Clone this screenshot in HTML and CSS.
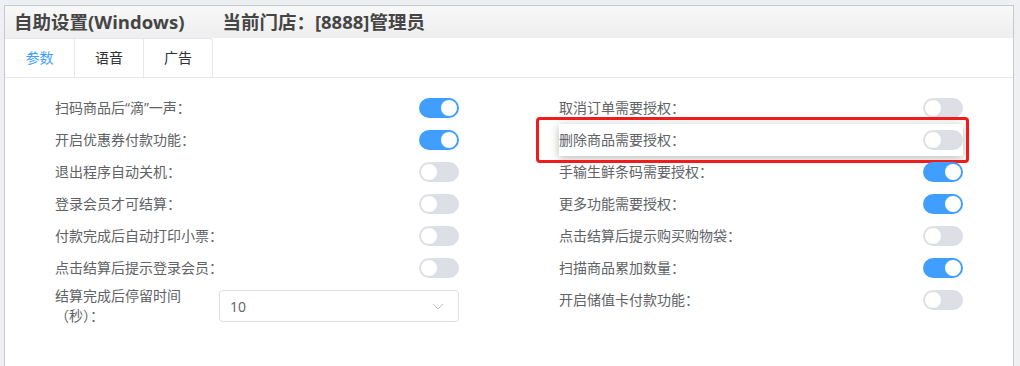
FILE: index.html
```html
<!DOCTYPE html>
<html lang="zh-CN">
<head>
<meta charset="utf-8">
<title>自助设置(Windows)</title>
<link rel="stylesheet" href="styles.css">
</head>
<body>
<div class="panel">
  <div class="panel-head">
    <span class="title">自助设置(Windows)</span>
    <span class="title store">当前门店：[8888]管理员</span>
  </div>
  <div class="tabs">
    <div class="tab-list">
      <div class="tab active">参数</div>
      <div class="tab">语音</div>
      <div class="tab">广告</div>
    </div>
  </div>
  <div class="content">
    <div class="form-grid">
      <div class="col">
        <div class="row"><span class="label">扫码商品后“滴”一声：</span><span class="switch on"></span></div>
        <div class="row"><span class="label">开启优惠券付款功能：</span><span class="switch on"></span></div>
        <div class="row"><span class="label">退出程序自动关机：</span><span class="switch"></span></div>
        <div class="row"><span class="label">登录会员才可结算：</span><span class="switch"></span></div>
        <div class="row"><span class="label">付款完成后自动打印小票：</span><span class="switch"></span></div>
        <div class="row"><span class="label">点击结算后提示登录会员：</span><span class="switch"></span></div>
        <div class="row select-row">
          <span class="label wrap">结算完成后停留时间（秒）：</span>
          <div class="select">
            <span class="select-value">10</span>
            <svg class="chevron" width="12" height="7" viewBox="0 0 12 7"><polyline points="1,1 6,6 11,1" fill="none" stroke="#c0c4cc" stroke-width="1"/></svg>
          </div>
        </div>
      </div>
      <div class="col">
        <div class="row"><span class="label">取消订单需要授权：</span><span class="switch"></span></div>
        <div class="row highlight"><span class="label">删除商品需要授权：</span><span class="switch"></span></div>
        <div class="row"><span class="label">手输生鲜条码需要授权：</span><span class="switch on"></span></div>
        <div class="row"><span class="label">更多功能需要授权：</span><span class="switch on"></span></div>
        <div class="row"><span class="label">点击结算后提示购买购物袋：</span><span class="switch"></span></div>
        <div class="row"><span class="label">扫描商品累加数量：</span><span class="switch on"></span></div>
        <div class="row"><span class="label">开启储值卡付款功能：</span><span class="switch"></span></div>
      </div>
    </div>
  </div>
</div>
</body>
</html>
```
FILE: styles.css
```css
* { box-sizing: border-box; }
html, body { margin: 0; padding: 0; }
body {
  background: #eff0f4;
  font-family: "Open Sans", "Noto Sans CJK SC", sans-serif;
  height: 366px;
  overflow: hidden;
}
.panel {
  margin: 5px 6px 0 4px;
  border: 1px solid #c8c8c8;
  border-bottom: none;
  background: #fff;
  height: 361px;
}
.panel-head {
  height: 32px;
  background: linear-gradient(#f8f8f8, #eeeeee);
  display: flex;
  align-items: center;
  padding-left: 9px;
}
.title {
  font-size: 18.5px;
  font-weight: 700;
  color: #454545;
  line-height: 24px;
}
.store { margin-left: 38px; }
.tabs {
  height: 40px;
  border-bottom: 1px solid #e4e7ed;
  display: flex;
}
.tab-list {
  display: flex;
  border-right: 1px solid #e4e7ed;
  border-top: 1px solid #e4e7ed;
  border-top-right-radius: 4px;
}
.tab {
  width: 69px;
  text-align: center;
  font-size: 14px;
  line-height: 38px;
  color: #303133;
  border-left: 1px solid #e4e7ed;
}
.tab:first-child { border-left: none; width: 69px; }
.tab.active { color: #409eff; }
.content { padding: 14px 0 0 50px; }
.form-grid {
  display: grid;
  grid-template-columns: 404px 404px;
  column-gap: 100px;
}
.col { display: flex; flex-direction: column; }
.row {
  height: 32px;
  display: flex;
  align-items: center;
  justify-content: space-between;
}
.label {
  font-size: 14px;
  line-height: 20px;
  color: #606266;
}
.switch {
  position: relative;
  width: 40px;
  height: 20px;
  border-radius: 10px;
  background: #dcdfe6;
  flex: none;
}
.switch::after {
  content: "";
  position: absolute;
  top: 2px;
  left: 2px;
  width: 16px;
  height: 16px;
  border-radius: 50%;
  background: #fff;
}
.switch.on { background: #409eff; }
.switch.on::after { left: 22px; }
.select-row {
  height: 40px;
  margin-top: 2px;
}
.label.wrap {
  width: 164px;
  padding-right: 12px;
}
.select {
  width: 240px;
  height: 32px;
  border: 1px solid #dcdfe6;
  border-radius: 4px;
  display: flex;
  align-items: center;
  justify-content: space-between;
  padding: 0 14px 0 10px;
}
.select-value {
  font-size: 14px;
  color: #606266;
}
.highlight {
  position: relative;
  background: #fff;
  box-shadow: 0 2px 9px rgba(0, 0, 0, 0.28);
}
.highlight::after {
  content: "";
  position: absolute;
  left: -23px;
  right: -6px;
  top: -7px;
  bottom: -7px;
  border: 3px solid #f01c1c;
  border-radius: 4px;
}
```
